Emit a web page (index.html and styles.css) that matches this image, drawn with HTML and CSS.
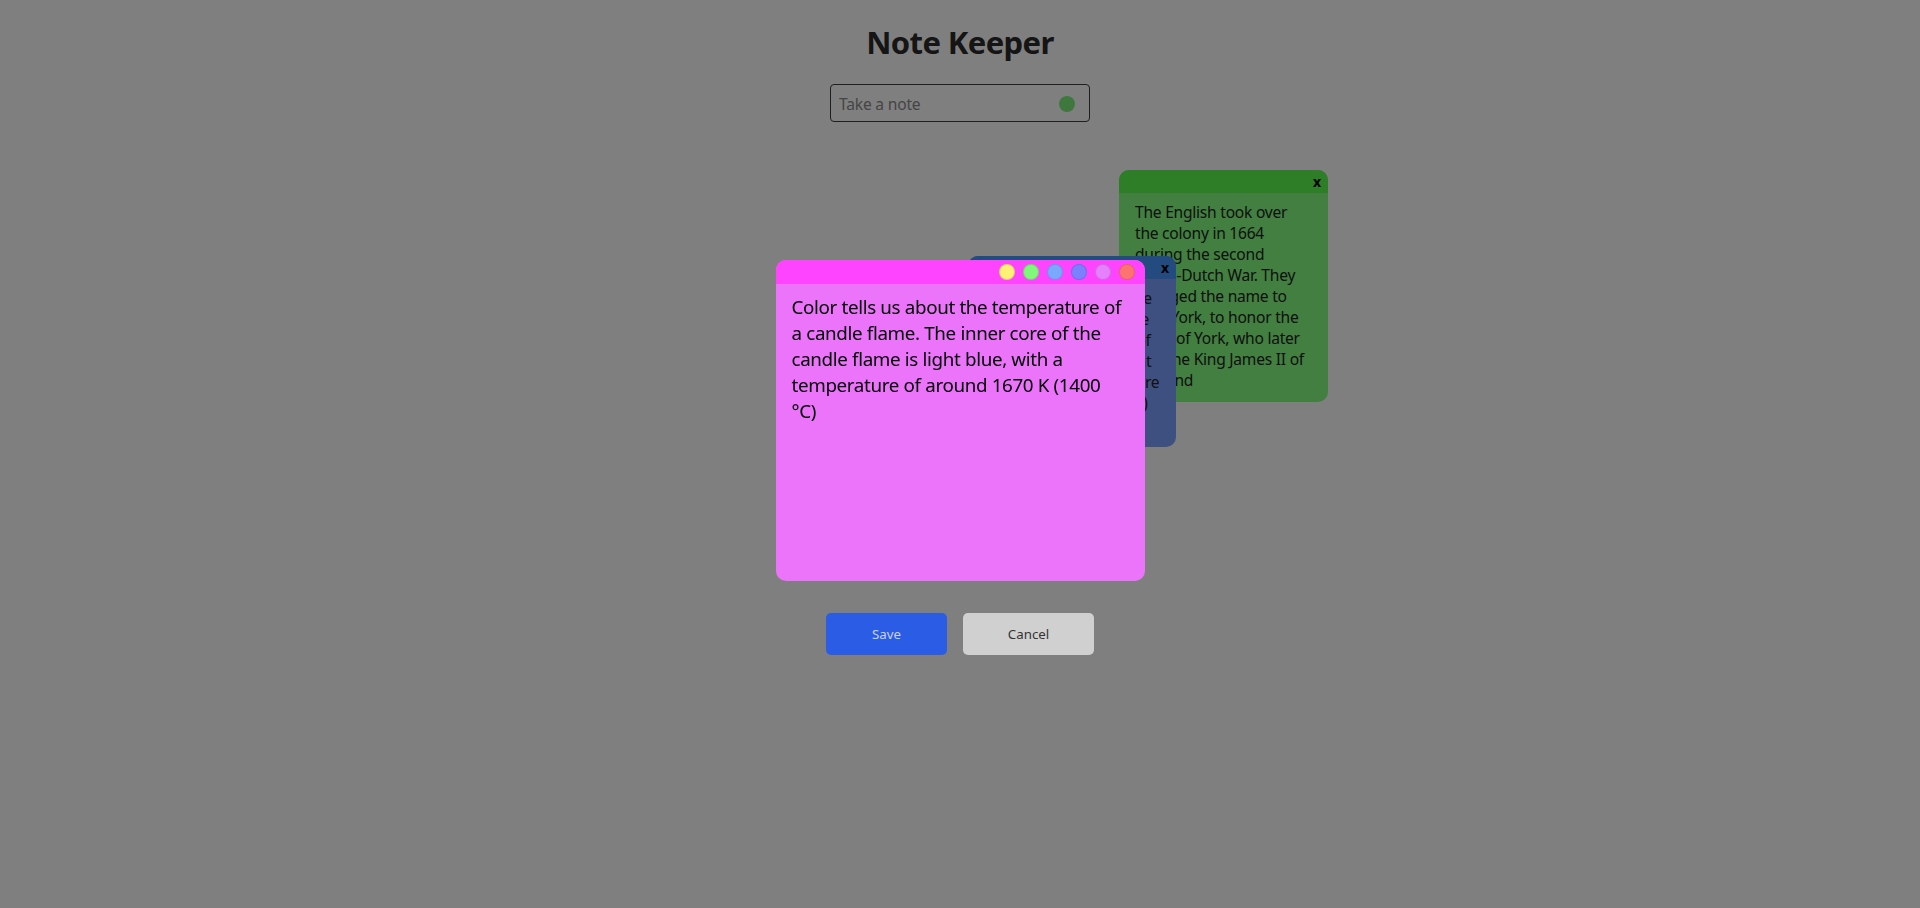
FILE: index.html
```html
<!DOCTYPE html>
<html lang="en">
<head>
<meta charset="utf-8">
<title>Note Keeper</title>
<link rel="stylesheet" href="styles.css">
</head>
<body>
  <div class="app">
    <h1 class="title">Note Keeper</h1>
    <div class="take-note">
      <input class="take-input" type="text" placeholder="Take a note">
      <span class="take-dot"></span>
    </div>
    <div class="board">
      <div class="note note-green">
        <div class="note-head"><span class="note-close">x</span></div>
        <div class="note-body">The English took over the colony in 1664 during the second Anglo-Dutch War. They changed the name to New York, to honor the Duke of York, who later was the King James II of England</div>
      </div>
      <div class="note note-blue">
        <div class="note-head"><span class="note-close">x</span></div>
        <div class="note-body">A flame has a blue zone<br>at its base, where there<br>is a very good supply of<br>oxygen for a hot, bright<br>and clean burn. The core<br>(about 1400 degrees C)</div>
      </div>
    </div>
  </div>

  <div class="overlay">
    <div class="editor">
      <div class="editor-head">
        <span class="swatch sw-yellow"></span>
        <span class="swatch sw-green"></span>
        <span class="swatch sw-blue"></span>
        <span class="swatch sw-indigo"></span>
        <span class="swatch sw-pink"></span>
        <span class="swatch sw-red"></span>
      </div>
      <div class="editor-body">Color tells us about the temperature of a candle flame. The inner core of the candle flame is light blue, with a temperature of around 1670 K (1400 °C)</div>
    </div>
    <div class="actions">
      <button class="btn btn-save" type="button">Save</button>
      <button class="btn btn-cancel" type="button">Cancel</button>
    </div>
  </div>
</body>
</html>
```

FILE: styles.css
```css
* { box-sizing: border-box; }

html, body {
  margin: 0;
  padding: 0;
  height: 100%;
}

body {
  background: #ffffff;
  font-family: "Noto Sans", "Open Sans", sans-serif;
  color: #222;
  overflow: hidden;
}

.app {
  display: flex;
  flex-direction: column;
  align-items: center;
}

.title {
  margin: 21px 0 0;
  font-size: 31px;
  line-height: 42px;
  font-weight: 700;
  letter-spacing: -0.6px;
  color: #2a2a2a;
}

.take-note {
  margin-top: 21px;
  width: 260px;
  height: 38px;
  border: 1px solid #3c3c3c;
  border-radius: 4px;
  display: flex;
  align-items: center;
  padding: 1px 14px 0 8px;
  background: #fff;
}

.take-input {
  flex: 1;
  min-width: 0;
  border: 0;
  outline: 0;
  background: transparent;
  font-family: inherit;
  font-size: 15.6px;
  letter-spacing: -0.2px;
  color: #222;
  padding: 0;
}

.take-input::placeholder { color: #8a8a8a; }

.take-dot {
  flex: none;
  width: 16px;
  height: 16px;
  border-radius: 50%;
  background: #7ef07e;
}

.board {
  position: relative;
  width: 100%;
  height: 700px;
}

.note {
  position: absolute;
  border-radius: 10px;
  overflow: hidden;
  display: flex;
  flex-direction: column;
}

.note-green {
  left: 1119px;
  top: 48px;
  width: 209px;
  height: 232px;
  background: #84fe80;
}
.note-green .note-head { background: #5cfa4e; }

.note-blue {
  left: 968px;
  top: 134px;
  width: 208px;
  height: 191px;
  background: #7aa0fe;
}
.note-blue .note-head { background: #4896fe; }
.note-blue .note-body { white-space: nowrap; }

.note-head {
  height: 23px;
  flex: none;
  display: flex;
  justify-content: flex-end;
  align-items: center;
  padding-right: 7px;
}

.note-close {
  font-size: 14px;
  font-weight: 700;
  color: #000;
  line-height: 1;
}

.note-body {
  padding: 9px 14px 0 16px;
  font-size: 15.6px;
  letter-spacing: -0.25px;
  line-height: 21px;
  color: #222;
}

.overlay {
  position: fixed;
  inset: 0;
  background: rgba(0, 0, 0, 0.5);
  display: flex;
  flex-direction: column;
  align-items: center;
  padding-top: 260px;
}

.editor {
  width: 369px;
  height: 321px;
  border-radius: 10px;
  overflow: hidden;
  background: #eb74fb;
  display: flex;
  flex-direction: column;
}

.editor-head {
  height: 24px;
  flex: none;
  background: #ff44ff;
  display: flex;
  justify-content: flex-end;
  align-items: center;
  gap: 8px;
  padding-right: 10px;
}

.swatch {
  width: 16px;
  height: 16px;
  border-radius: 50%;
  border: 1px solid rgba(0, 0, 0, 0.12);
}
.sw-yellow { background: #fff176; }
.sw-green { background: #80f87a; }
.sw-blue { background: #7aa8ff; }
.sw-indigo { background: #7a80ff; }
.sw-pink { background: #e680fc; }
.sw-red { background: #ff7272; }

.editor-body {
  padding: 10px 18px 0 16px;
  font-size: 18.8px;
  letter-spacing: -0.35px;
  line-height: 26px;
  color: #000;
}

.actions {
  margin-top: 32px;
  display: flex;
  gap: 16px;
}

.btn {
  height: 42px;
  border: 0;
  border-radius: 5px;
  font-family: "Noto Sans", "Open Sans", sans-serif;
  font-size: 13.3px;
  cursor: pointer;
}

.btn-save {
  width: 121px;
  background: #2b5ce6;
  color: #c8d2ee;
}

.btn-cancel {
  width: 131px;
  background: #d0d0d0;
  color: #333;
}
```
